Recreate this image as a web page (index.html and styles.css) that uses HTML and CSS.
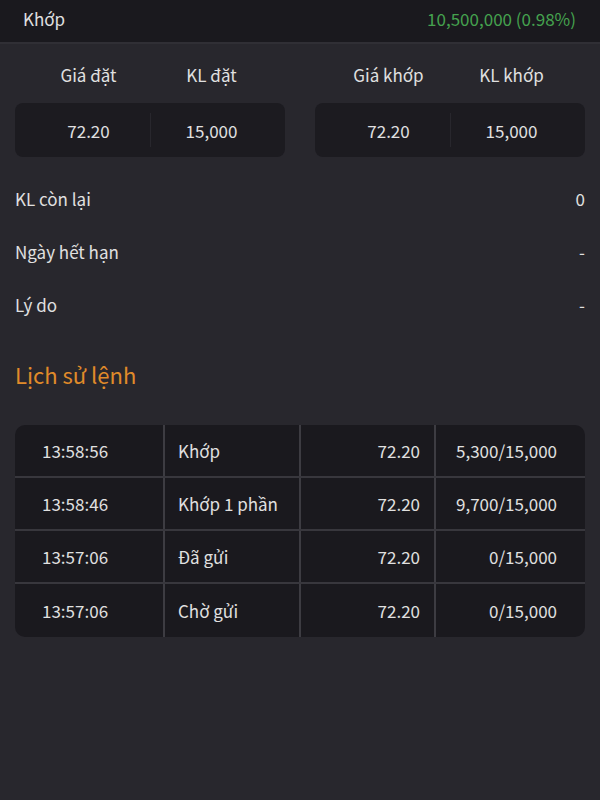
FILE: index.html
```html
<!DOCTYPE html>
<html lang="vi">
<head>
<meta charset="utf-8">
<link rel="stylesheet" href="styles.css">
</head>
<body>
<div class="topbar">
  <span class="status">Khớp</span>
  <span class="value-green">10,500,000 (0.98%)</span>
</div>
<main class="content">
  <section class="pairs">
    <div class="pair">
      <div class="pair-head"><span>Giá đặt</span><span>KL đặt</span></div>
      <div class="pair-box"><span>72.20</span><span>15,000</span></div>
    </div>
    <div class="pair">
      <div class="pair-head"><span>Giá khớp</span><span>KL khớp</span></div>
      <div class="pair-box"><span>72.20</span><span>15,000</span></div>
    </div>
  </section>
  <section class="info">
    <div class="info-row"><span>KL còn lại</span><span>0</span></div>
    <div class="info-row"><span>Ngày hết hạn</span><span>-</span></div>
    <div class="info-row"><span>Lý do</span><span>-</span></div>
  </section>
  <h2 class="title">Lịch sử lệnh</h2>
  <div class="history">
    <div class="hrow"><span class="c-time">13:58:56</span><span class="c-stat">Khớp</span><span class="c-price">72.20</span><span class="c-qty">5,300/15,000</span></div>
    <div class="hrow"><span class="c-time">13:58:46</span><span class="c-stat">Khớp 1 phần</span><span class="c-price">72.20</span><span class="c-qty">9,700/15,000</span></div>
    <div class="hrow"><span class="c-time">13:57:06</span><span class="c-stat">Đã gửi</span><span class="c-price">72.20</span><span class="c-qty">0/15,000</span></div>
    <div class="hrow"><span class="c-time">13:57:06</span><span class="c-stat">Chờ gửi</span><span class="c-price">72.20</span><span class="c-qty">0/15,000</span></div>
  </div>
</main>
</body>
</html>
```
FILE: styles.css
```css
* { box-sizing: border-box; }
html, body { margin: 0; padding: 0; }
body {
  width: 600px;
  height: 800px;
  background: #28272d;
  color: #e0e0e0;
  font-family: "Noto Sans CJK SC", "Noto Sans", sans-serif;
  font-size: 17px;
  overflow: hidden;
}
.topbar {
  height: 44px;
  background: #1a191e;
  border-bottom: 2px solid #302f35;
  display: flex;
  justify-content: space-between;
  align-items: center;
  padding: 0 24px 6px 23px;
}
.value-green { color: #45a24e; }
.content { padding: 0 15px; }
.pairs {
  display: grid;
  grid-template-columns: 1fr 1fr;
  gap: 30px;
  margin-top: 15px;
}
.pair-head, .pair-box {
  display: grid;
  grid-template-columns: 1fr 1fr;
  padding: 0 12px;
  text-align: center;
}
.pair-head { height: 30px; align-items: center; }
.pair-box {
  margin-top: 14px;
  height: 54px;
  align-items: center;
  background: #1c1b20;
  border-radius: 8px;
  position: relative;
}
.pair-box::after {
  content: "";
  position: absolute;
  left: 50%;
  top: 10px;
  bottom: 10px;
  width: 1px;
  background: #28272d;
}
.info { margin-top: 15px; }
.info-row {
  height: 53px;
  display: flex;
  justify-content: space-between;
  align-items: center;
}
.title {
  margin: 28px 0 0;
  height: 30px;
  line-height: 30px;
  font-size: 22px;
  font-weight: 400;
  color: #e08b2a;
}
.history {
  margin-top: 36px;
  background: #1a191e;
  border-radius: 10px;
  overflow: hidden;
}
.hrow {
  display: grid;
  grid-template-columns: 150px 136px 135px 1fr;
  height: 53px;
  align-items: stretch;
  border-bottom: 2px solid #38373d;
}
.hrow:last-child { border-bottom: none; }
.hrow span {
  display: flex;
  align-items: center;
  border-right: 2px solid #3d3c42;
}
.hrow span:last-child { border-right: none; }
.c-time { padding-left: 27px; }
.c-stat { padding-left: 13px; }
.c-price { justify-content: flex-end; padding-right: 14px; }
.c-qty { justify-content: flex-end; padding-right: 28px; }
```
